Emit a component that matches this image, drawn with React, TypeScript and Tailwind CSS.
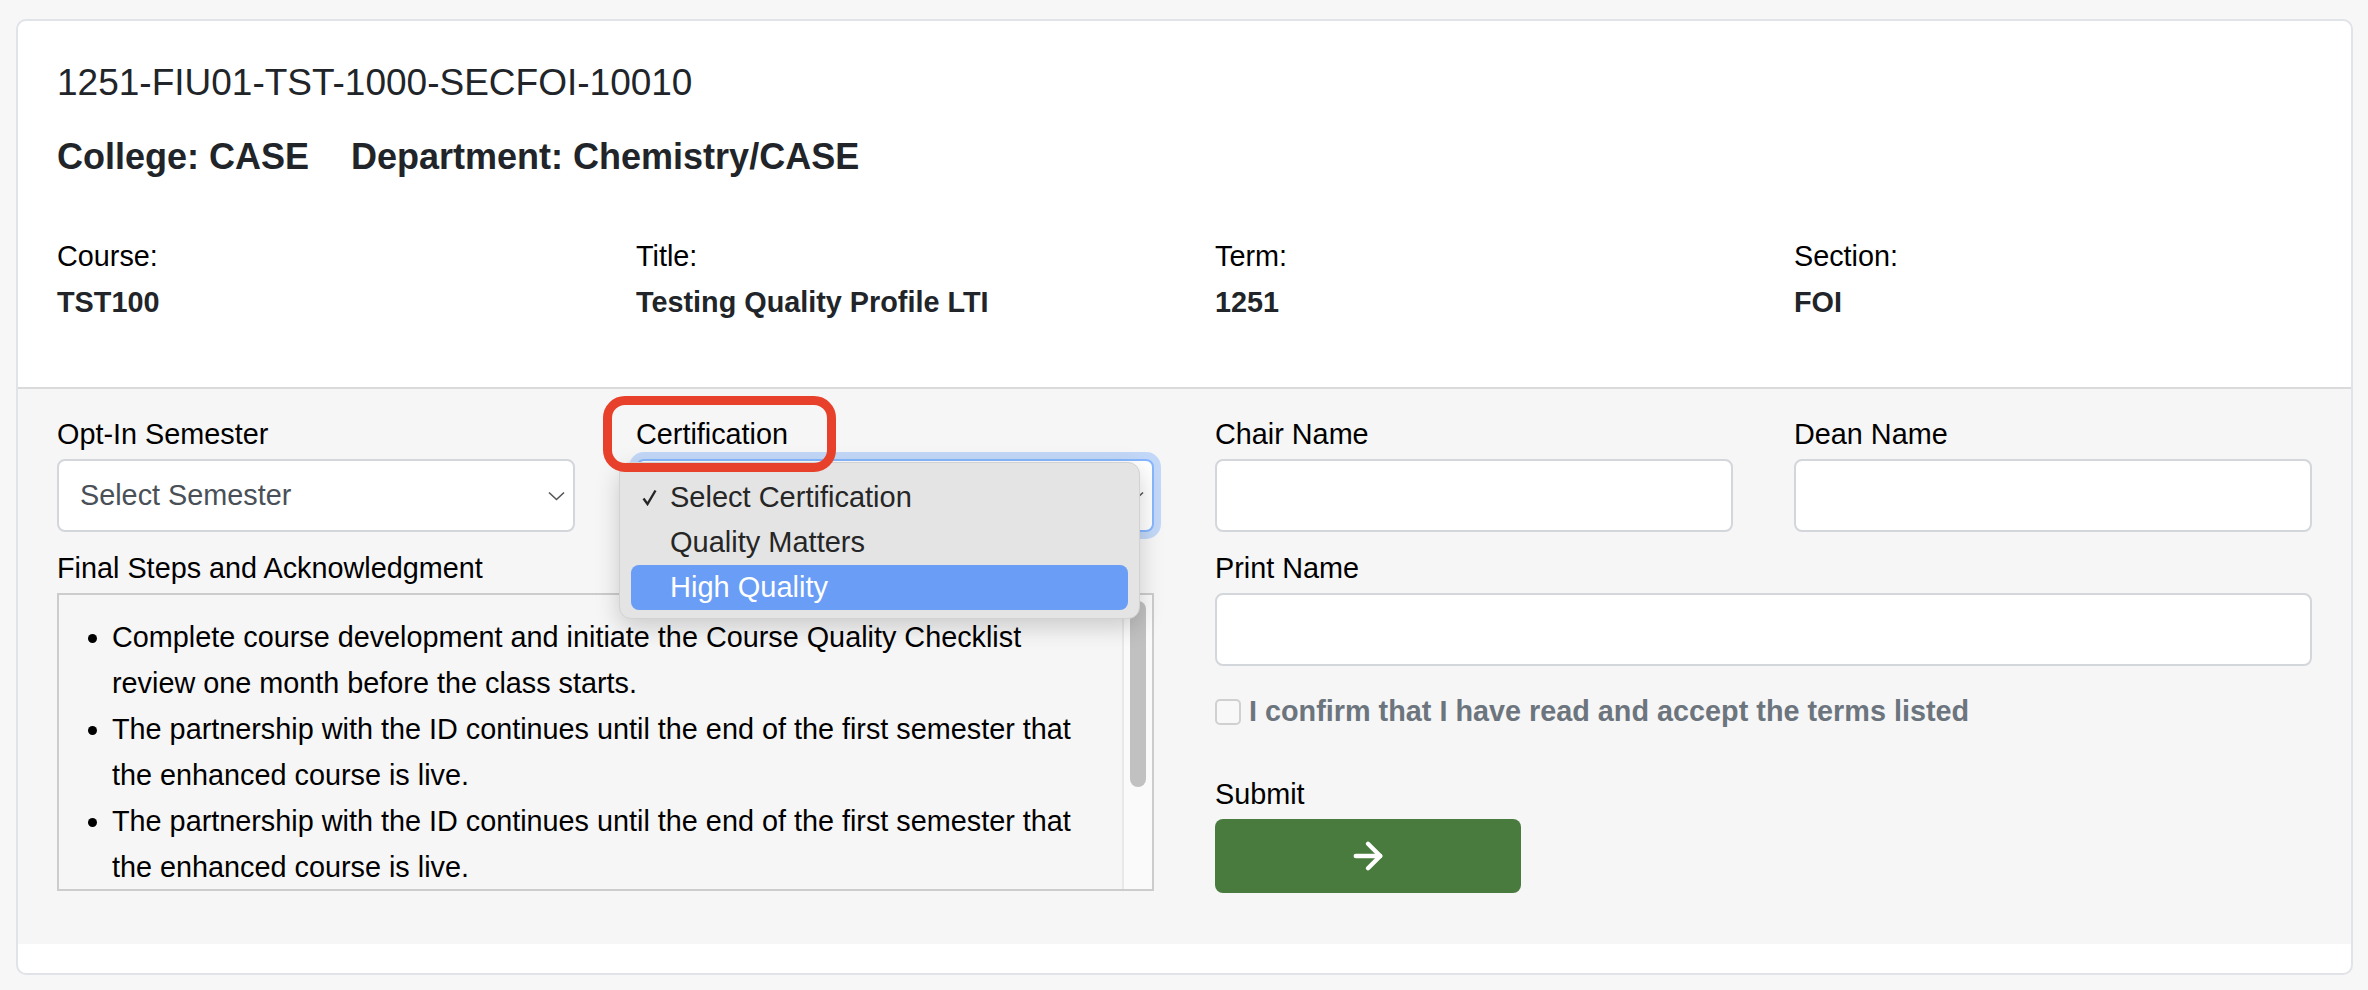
import { ArrowRight } from "lucide-react";

const infoItems = [
  { label: "Course:", value: "TST100" },
  { label: "Title:", value: "Testing Quality Profile LTI" },
  { label: "Term:", value: "1251" },
  { label: "Section:", value: "FOI" },
];

const steps = [
  "Complete course development and initiate the Course Quality Checklist review one month before the class starts.",
  "The partnership with the ID continues until the end of the first semester that the enhanced course is live.",
  "The partnership with the ID continues until the end of the first semester that the enhanced course is live.",
];

function Chevron() {
  return (
    <svg width="17" height="10" viewBox="0 0 17 10" fill="none">
      <path d="M1 1.5 L8.5 8.5 L16 1.5" stroke="#555" strokeWidth="1.6" />
    </svg>
  );
}

function FieldLabel({ children }: { children: React.ReactNode }) {
  return <div className="text-[28.8px] leading-[40px] text-black mb-[5px]">{children}</div>;
}

export default function App() {
  return (
    <div className="min-h-screen w-full bg-[#f7f7f7] pl-[16px] pr-[15px] pt-[19px] pb-[15px] font-['Liberation_Sans',Arial,sans-serif]">
      <div className="bg-white border-2 border-[#e0e3e7] rounded-[10px] pb-[29px]">
        {/* header */}
        <div className="px-[39px] pt-[40px] pb-[62px] text-[#212529]">
          <div className="text-[37px] leading-[44px]">1251-FIU01-TST-1000-SECFOI-10010</div>
          <div className="mt-[30px] text-[36px] leading-[44px] font-bold flex gap-x-[42px]">
            <span>College: CASE</span>
            <span>Department: Chemistry/CASE</span>
          </div>
          <div className="mt-[54px] grid grid-cols-4 gap-x-[61px] text-[28.8px] leading-[46px]">
            {infoItems.map((item) => (
              <div key={item.label}>
                <div className="text-black">{item.label}</div>
                <div className="font-bold">{item.value}</div>
              </div>
            ))}
          </div>
        </div>

        {/* form */}
        <div className="border-t-2 border-[#dadada] bg-[#f6f6f6] px-[39px] pt-[25px] pb-[51px]">
          <div className="grid grid-cols-4 gap-x-[61px]">
            <div>
              <FieldLabel>Opt-In Semester</FieldLabel>
              <div className="h-[73px] bg-white border-2 border-[#d3d6da] rounded-[8px] flex items-center justify-between pl-[21px] pr-[8px]">
                <span className="text-[28.8px] text-[#495057]">Select Semester</span>
                <Chevron />
              </div>
            </div>

            <div className="relative">
              <FieldLabel>Certification</FieldLabel>
              <div className="h-[73px] bg-white border-2 border-[#86b7fe] rounded-[8px] shadow-[0_0_0_7px_rgba(13,110,253,0.22)] flex items-center justify-end pr-[8px]">
                <Chevron />
              </div>

              {/* open native menu */}
              <div className="absolute left-[-17px] top-[48px] w-[521px] h-[157px] z-10 rounded-[12px] bg-[#e4e4e4] border border-[#d2d2d2] shadow-[0_8px_24px_rgba(0,0,0,0.18)] pt-[12px] px-[11px] text-[29px] text-[#262626]">
                <div className="h-[45px] flex items-center">
                  <svg className="ml-[11px] mr-[13px]" width="15" height="17" viewBox="0 0 15 17" fill="none">
                    <path d="M1.5 9.5 L5.5 15 L13.5 1.5" stroke="#262626" strokeWidth="2.4" />
                  </svg>
                  <span>Select Certification</span>
                </div>
                <div className="h-[45px] flex items-center pl-[39px]">Quality Matters</div>
                <div className="h-[45px] flex items-center pl-[39px] rounded-[8px] bg-[#6a9df5] text-white">High Quality</div>
              </div>

              {/* annotation */}
              <div className="absolute left-[-33px] top-[-18px] w-[233px] h-[76px] z-20 border-[9px] border-[#e8412b] rounded-[22px]" />
            </div>

            <div>
              <FieldLabel>Chair Name</FieldLabel>
              <div className="h-[73px] bg-white border-2 border-[#d3d6da] rounded-[8px]" />
            </div>

            <div>
              <FieldLabel>Dean Name</FieldLabel>
              <div className="h-[73px] bg-white border-2 border-[#d3d6da] rounded-[8px]" />
            </div>
          </div>

          <div className="mt-[16px] grid grid-cols-2 gap-x-[61px]">
            <div>
              <FieldLabel>Final Steps and Acknowledgment</FieldLabel>
              <div className="h-[298px] border-2 border-[#cccccc] bg-[#f6f6f6] flex">
                <div className="flex-1 overflow-hidden">
                  <ul className="list-disc pl-[53px] pr-[31px] pt-[19px] text-[28.8px] leading-[46px] text-black">
                    {steps.map((step, index) => (
                      <li key={index}>{step}</li>
                    ))}
                  </ul>
                </div>
                {/* scrollbar */}
                <div className="w-[30px] border-l-2 border-[#e8e8e8] bg-[#fafafa] pt-[6px] flex justify-center">
                  <div className="w-[16px] h-[186px] rounded-full bg-[#c1c1c1]" />
                </div>
              </div>
            </div>

            <div>
              <FieldLabel>Print Name</FieldLabel>
              <div className="h-[73px] bg-white border-2 border-[#d3d6da] rounded-[8px]" />

              <div className="mt-[26px] h-[40px] flex items-center gap-x-[8px]">
                <div className="w-[26px] h-[26px] border-2 border-[#d0d0d0] rounded-[5px] bg-[#f8f8f8]" />
                <span className="text-[28.8px] font-bold text-[#6c757d]">
                  I confirm that I have read and accept the terms listed
                </span>
              </div>

              <div className="mt-[42px]">
                <FieldLabel>Submit</FieldLabel>
                <button className="w-[306px] h-[74px] rounded-[8px] bg-[#497b3e] flex items-center justify-center">
                  <ArrowRight size={42} strokeWidth={2.5} color="#ffffff" />
                </button>
              </div>
            </div>
          </div>
        </div>
      </div>
    </div>
  );
}
